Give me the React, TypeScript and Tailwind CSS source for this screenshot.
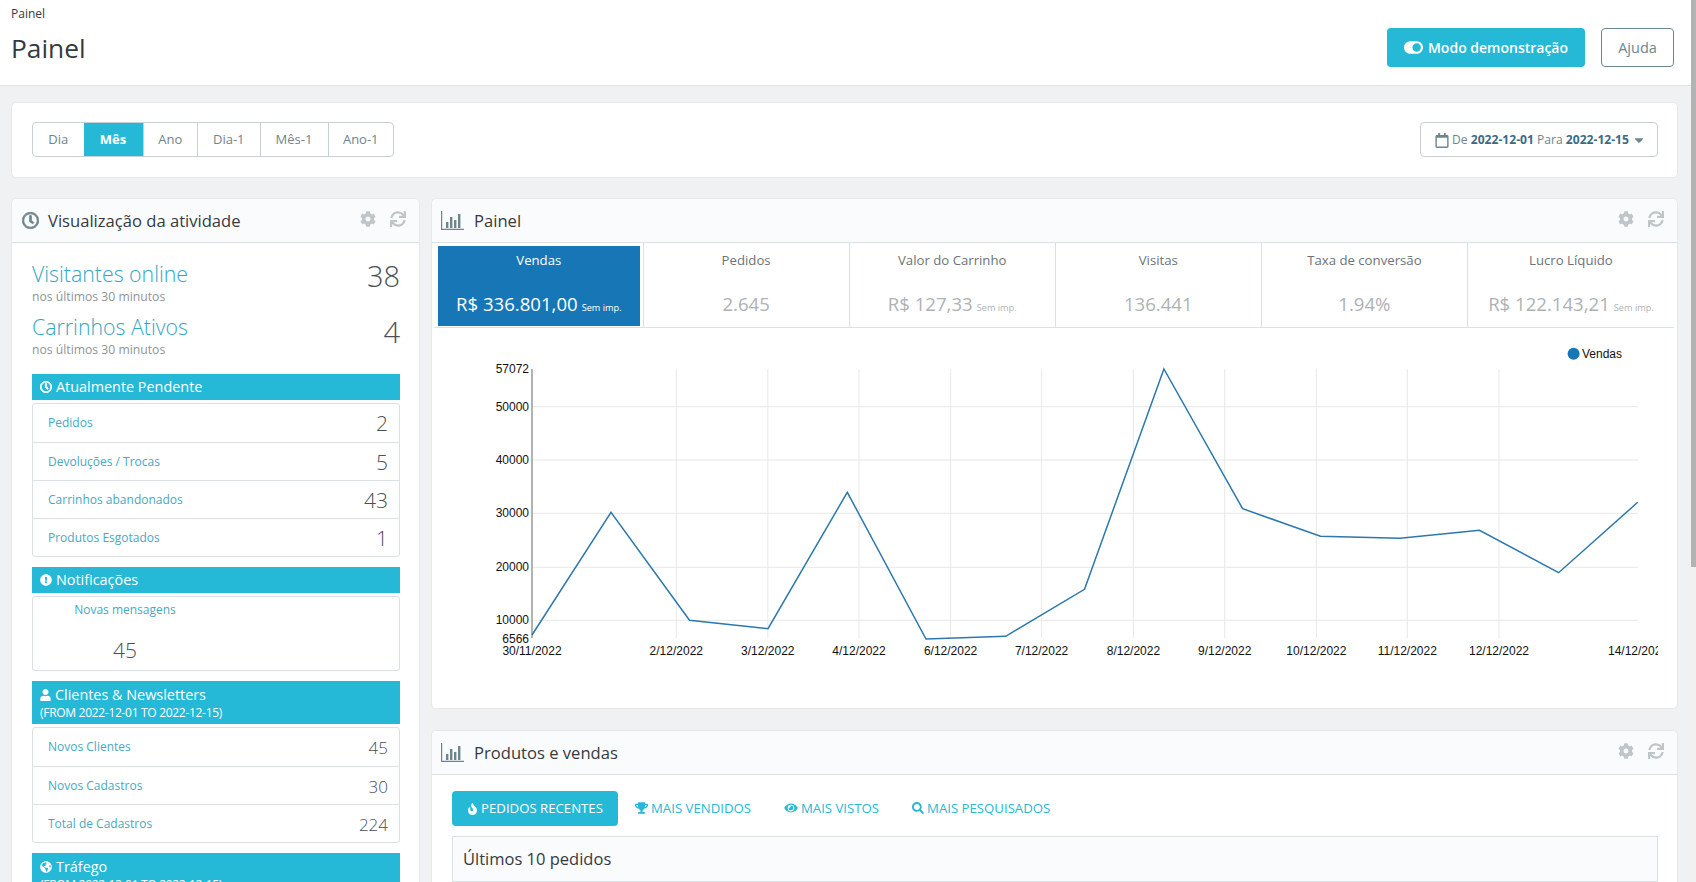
import React from "react";
import { FaCog, FaSync, FaRegClock, FaExclamationCircle, FaUser, FaGlobeAmericas, FaFire, FaTrophy, FaEye, FaSearch, FaRegCalendar, FaToggleOn, FaCaretDown } from "react-icons/fa";

const font = "font-['Open_Sans',sans-serif]";

function BarIcon({ className }: { className: string }) {
  return (
    <svg viewBox="0 0 23 19" className={className} fill="currentColor">
      <path d="M0 0h1.2v17.8H23V19H0z" />
      <rect x="5" y="11" width="2.4" height="6" />
      <rect x="9" y="6" width="2.4" height="11" />
      <rect x="13" y="9" width="2.4" height="8" />
      <rect x="17" y="3" width="2.4" height="14" />
    </svg>
  );
}

function PanelHead({ icon, title }: { icon: React.ReactNode; title: string }) {
  return (
    <div className="h-[44px] flex items-center bg-[#fafbfc] border-b border-[#dbe0e2] rounded-t-[5px] pl-[9px] pr-[13px] shrink-0">
      {icon}
      <span className="text-[16.6px] text-[#363a41] font-medium leading-none pt-[1px]">{title}</span>
      <div className="ml-auto flex items-center gap-[14px] text-[#bfc5c8] pb-[3px]">
        <FaCog className="w-[16px] h-[16px]" />
        <FaSync className="w-[16px] h-[16px]" />
      </div>
    </div>
  );
}

function SectionBar({ icon, title, sub }: { icon: React.ReactNode; title: string; sub?: string }) {
  return (
    <div className={`bg-[#25b9d7] text-white px-[8px] ${sub ? "pt-[4px] h-[43px]" : "h-[26px] flex items-center"}`}>
      <div className="flex items-center gap-[4px] text-[14.4px] leading-[20px]">
        {icon}
        <span>{title}</span>
      </div>
      {sub && <div className="text-[12px] leading-[17px] -mt-[1px] tracking-[-0.3px]">{sub}</div>}
    </div>
  );
}

function Rows({ rows, small }: { rows: [string, string][]; small?: boolean }) {
  return (
    <div className="mt-[3px] border border-[#dbe0e2] rounded-[3px]">
      {rows.map(([l, v], i) => (
        <div key={l} className={`h-[38px] flex items-center justify-between pl-[15px] pr-[11px] ${i ? "border-t border-[#dbe0e2]" : ""}`}>
          <span className="text-[12px] text-[#46a9c2]">{l}</span>
          <span className={`${small ? "text-[17px]" : "text-[21px]"} font-light text-[#4a4f55] leading-none pt-[1px]`}>{v}</span>
        </div>
      ))}
    </div>
  );
}

function KpiText({ label, value, sem, active }: { label: string; value: string; sem?: boolean; active?: boolean }) {
  return (
    <>
      <div className="text-[13.2px] leading-[20px]">{label}</div>
      <div className={`flex items-baseline gap-[4px] mt-[19px] ${active ? "" : "text-[#aeb2b5]"}`}>
        <span className="text-[18.6px] leading-[30px]">{value}</span>
        {sem && <span className="text-[9.2px]">Sem imp.</span>}
      </div>
    </>
  );
}

function Kpi({ label, value, sem, last }: { label: string; value: string; sem?: boolean; last?: boolean }) {
  return (
    <div className={`w-[206.5px] h-full flex flex-col items-center pt-[7px] text-[#6c7378] ${last ? "" : "border-r border-[#dbe0e2]"}`}>
      <KpiText label={label} value={value} sem={sem} />
    </div>
  );
}

const pts: [number, number][] = [
  [532, 635], [611, 512.3], [689.5, 620.3], [768, 628.7], [847.3, 492.3], [926, 639], [1005.7, 636.3], [1084.5, 589.3],
  [1163.9, 369], [1242.6, 508.7], [1320.4, 536.3], [1400, 538.3], [1479.5, 530.3], [1558.6, 572.7], [1637.7, 502.3],
];
const hLines: [number, string][] = [[406.7, "50000"], [460, "40000"], [513.3, "30000"], [567.3, "20000"], [620.3, "10000"]];
const vLines: [number, string][] = [
  [676.3, "2/12/2022"], [767.8, "3/12/2022"], [859, "4/12/2022"], [950.6, "6/12/2022"], [1041.6, "7/12/2022"],
  [1133.4, "8/12/2022"], [1224.7, "9/12/2022"], [1316.4, "10/12/2022"], [1407.3, "11/12/2022"], [1499, "12/12/2022"],
];

function Chart() {
  return (
    <svg viewBox="433 329 1225 340" className="w-[1225px] h-[340px] block mt-[1px] ml-[1px] shrink-0 font-['Liberation_Sans',sans-serif]">
      {hLines.map(([y]) => <line key={y} x1="532" x2="1638" y1={y} y2={y} stroke="#e8e8e8" strokeWidth="1" />)}
      {vLines.map(([x]) => <line key={x} x1={x} x2={x} y1="369" y2="638" stroke="#e8e8e8" strokeWidth="1" />)}
      <line x1="532" x2="532" y1="369" y2="638" stroke="#999" strokeWidth="1.5" />
      <polyline points={pts.map((p) => p.join(",")).join(" ")} fill="none" stroke="#2c78ad" strokeWidth="1.5" />
      <g fontSize="12" fill="#111" textAnchor="end">
        <text x="529" y="373">57072</text>
        {hLines.map(([y, t]) => <text key={t} x="529" y={y + 4}>{t}</text>)}
        <text x="529" y="643">6566</text>
      </g>
      <g fontSize="12" fill="#111" textAnchor="middle">
        <text x="532" y="655">30/11/2022</text>
        {vLines.map(([x, t]) => <text key={t} x={x} y="655">{t}</text>)}
        <text x="1638" y="655">14/12/2022</text>
      </g>
      <circle cx="1573.6" cy="353.7" r="6" fill="#1777b6" />
      <text x="1582" y="358" fontSize="12" fill="#111">Vendas</text>
    </svg>
  );
}

export default function App() {
  const ranges = ["Dia", "Mês", "Ano", "Dia-1", "Mês-1", "Ano-1"];
  const widths = ["w-[50.5px]", "w-[59px]", "w-[54.5px]", "w-[62.5px]", "w-[68px]", "w-[65.5px]"];
  return (
    <div className={`${font} flex h-[882px] w-[1696px] overflow-hidden bg-[#eff1f2]`}>
      <div className="w-[1691px] shrink-0">
        <header className="h-[86px] bg-white border-b border-[#dfe3e5] flex justify-between px-[11px] relative">
          <div>
            <div className="text-[12px] text-[#363a41] pt-[6px] leading-[16px]">Painel</div>
            <h1 className="text-[26.3px] text-[#363a41] leading-[36px] mt-[8px]">Painel</h1>
          </div>
          <div className="flex gap-[16px] pt-[28px] pr-[6px]">
            <button className="h-[39px] w-[198px] bg-[#25b9d7] rounded-[4px] text-white text-[14px] font-semibold flex items-center justify-center gap-[5px]">
              <FaToggleOn className="w-[19px] h-[19px]" />Modo demonstração
            </button>
            <button className="h-[39px] w-[73px] border border-[#6c868e] rounded-[4px] text-[#6c868e] text-[14.5px] font-medium">Ajuda</button>
          </div>
        </header>

        <div className="pl-[11px] pr-[13px] pt-[16px]">
          <div className="h-[76px] bg-white rounded-[5px] border border-[#e6e9eb] flex items-center justify-between pl-[20px] pr-[19px] pb-[1px]">
            <div className="flex h-[35px] border border-[#c7d0d4] rounded-[4px] overflow-hidden text-[#6c868e] text-[13px]">
              {ranges.map((r, i) => (
                <div key={r} className={`${widths[i]} flex items-center justify-center pt-[1px] ${i === 1 ? "bg-[#25b9d7] text-white font-bold" : ""} ${i > 1 ? "border-l border-[#c7d0d4]" : ""}`}>{r}</div>
              ))}
            </div>
            <button className="h-[35px] w-[238px] border border-[#c7d0d4] rounded-[4px] flex items-center justify-center text-[#6c868e] text-[12.1px] gap-[3px] pl-[3px] pt-[1px]">
              <FaRegCalendar className="w-[14px] h-[15px]" />
              <span>De <b className="text-[#3a6a86] font-bold">2022-12-01</b> Para <b className="text-[#3a6a86] font-bold">2022-12-15</b></span>
              <FaCaretDown className="w-[14px] h-[14px]" />
            </button>
          </div>

          <div className="flex gap-[11px] mt-[20px] items-start">
            <section className="w-[409px] shrink-0 bg-white rounded-[5px] border border-[#e6e9eb]">
              <PanelHead title="Visualização da atividade" icon={<FaRegClock stroke="currentColor" strokeWidth={24} className="w-[17px] h-[17px] text-[#6c868e] ml-[1px] mr-[9px]" />} />
              <div className="pl-[20px] pr-[19px]">
                <div className="flex justify-between pt-[16px] h-[57px]">
                  <div>
                    <div className="text-[21.3px] leading-[29px] text-[#33a7c4] font-light">Visitantes online</div>
                    <div className="text-[12.2px] leading-[16px] mt-[1px] text-[#8f9498]">nos últimos 30 minutos</div>
                  </div>
                  <div className="text-[29px] font-light text-[#4a4f55] leading-[40px] -mt-[3px]">38</div>
                </div>
                <div className="flex justify-between pt-[12px] h-[53px]">
                  <div>
                    <div className="text-[21.3px] leading-[29px] text-[#33a7c4] font-light">Carrinhos Ativos</div>
                    <div className="text-[12.2px] leading-[16px] mt-[1px] text-[#8f9498]">nos últimos 30 minutos</div>
                  </div>
                  <div className="text-[29px] font-light text-[#4a4f55] leading-[40px]">4</div>
                </div>
                <div className="mt-[21px]">
                  <SectionBar title="Atualmente Pendente" icon={<FaRegClock stroke="currentColor" strokeWidth={30} className="w-[12px] h-[12px]" />} />
                  <Rows rows={[["Pedidos", "2"], ["Devoluções / Trocas", "5"], ["Carrinhos abandonados", "43"], ["Produtos Esgotados", "1"]]} />
                </div>
                <div className="mt-[10px]">
                  <SectionBar title="Notificações" icon={<FaExclamationCircle className="w-[12px] h-[12px]" />} />
                  <div className="mt-[3px] h-[75px] border border-[#dbe0e2] rounded-[3px] w-full">
                    <div className="w-[184px] text-center text-[12px] text-[#46a9c2] pt-[5px] leading-[16px]">Novas mensagens</div>
                    <div className="w-[184px] text-center text-[21px] font-light text-[#4a4f55] leading-[28px] mt-[18px]">45</div>
                  </div>
                </div>
                <div className="mt-[10px]">
                  <SectionBar title="Clientes & Newsletters" sub="(FROM 2022-12-01 TO 2022-12-15)" icon={<FaUser className="w-[11px] h-[12px]" />} />
                  <Rows small rows={[["Novos Clientes", "45"], ["Novos Cadastros", "30"], ["Total de Cadastros", "224"]]} />
                </div>
                <div className="mt-[10px]">
                  <SectionBar title="Tráfego" sub="(FROM 2022-12-01 TO 2022-12-15)" icon={<FaGlobeAmericas className="w-[12px] h-[12px]" />} />
                </div>
              </div>
            </section>

            <div className="flex-1 min-w-0">
              <section className="h-[511px] bg-white rounded-[5px] border border-[#e6e9eb] flex flex-col">
                <PanelHead title="Painel" icon={<BarIcon className="w-[23px] h-[19px] text-[#6c868e] mr-[10px]" />} />
                <div className="mx-[3px] h-[85px] border-b border-[#dbe0e2] flex shrink-0">
                  <div className="w-[209px] h-full border-r border-[#dbe0e2] pl-[3px] pr-[3px] pt-[3px]">
                    <div className="h-[80px] bg-[#1777b6] text-white flex flex-col items-center pt-[4px]">
                      <KpiText active label="Vendas" value="R$ 336.801,00" sem />
                    </div>
                  </div>
                  <Kpi label="Pedidos" value="2.645" />
                  <Kpi label="Valor do Carrinho" value="R$ 127,33" sem />
                  <Kpi label="Visitas" value="136.441" />
                  <Kpi label="Taxa de conversão" value="1.94%" />
                  <Kpi last label="Lucro Líquido" value="R$ 122.143,21" sem />
                </div>
                <Chart />
              </section>

              <section className="mt-[21px] bg-white rounded-t-[5px] border border-[#e6e9eb] h-[200px]">
                <PanelHead title="Produtos e vendas" icon={<BarIcon className="w-[23px] h-[19px] text-[#6c868e] mr-[10px]" />} />
                <div className="px-[20px] pt-[16px]">
                  <div className="flex items-center text-[13.2px] text-[#25b9d7] h-[35px]">
                    <div className="w-[166px] h-[35px] rounded-[4px] bg-[#25b9d7] text-white flex items-center justify-center gap-[3px]"><FaFire className="w-[11px] h-[12px]" />PEDIDOS RECENTES</div>
                    <div className="ml-[17px] flex items-center gap-[3px]"><FaTrophy className="w-[13px] h-[12px]" />MAIS VENDIDOS</div>
                    <div className="ml-[33px] flex items-center gap-[3px]"><FaEye className="w-[14px] h-[12px]" />MAIS VISTOS</div>
                    <div className="ml-[33px] flex items-center gap-[3px]"><FaSearch className="w-[12px] h-[12px]" />MAIS PESQUISADOS</div>
                  </div>
                  <div className="mt-[10px] h-[46px] w-[1206px] bg-[#fafbfc] border border-[#dbe0e2] pl-[10px] pt-[11px] text-[16.5px] text-[#363a41] font-medium leading-[22px]">Últimos 10 pedidos</div>
                </div>
              </section>
            </div>
          </div>
        </div>
      </div>
      <div className="w-[5px] shrink-0 bg-[#f1f1f1]">
        <div className="h-[567px] bg-[#b3b3b3]" />
      </div>
    </div>
  );
}
